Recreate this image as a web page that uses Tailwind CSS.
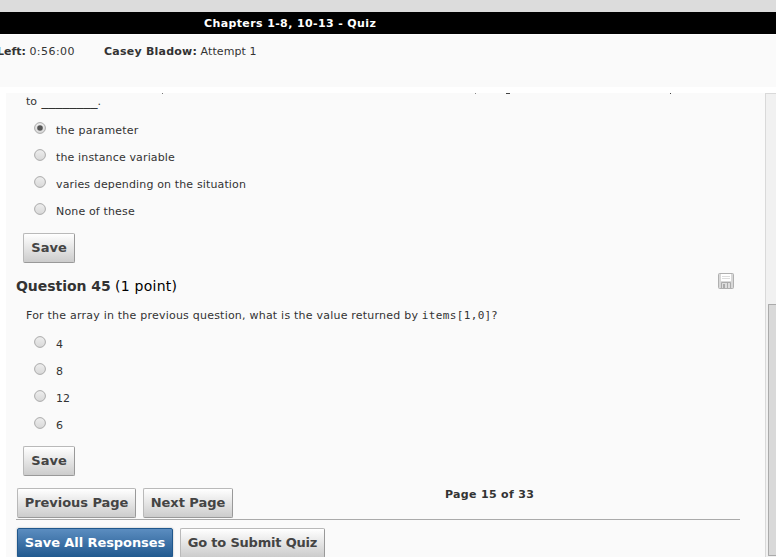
<!DOCTYPE html>
<html lang="en">
<head>
<meta charset="utf-8">
<title>Chapters 1-8, 10-13 - Quiz</title>
<script src="https://cdn.jsdelivr.net/npm/@tailwindcss/browser@4"></script>
</head>
<body class="bg-white">
<div class="w-[776px] h-[557px] overflow-hidden flex flex-col font-['DejaVu_Sans',sans-serif] text-[11px] leading-[14px] text-[#333] whitespace-nowrap">
  <div class="h-3 shrink-0 bg-[#dcdcdc]"></div>
  <header class="h-[22px] shrink-0 bg-black text-white font-bold pl-[204px] pt-[5px]"><span class="tracking-[0.38px]">Chapters 1-8, 10-13 - Quiz</span></header>
  <div class="h-[52px] mt-px shrink-0 bg-[#fafafa] flex pt-[10px]">
    <div class="w-[104px] flex"><span class="-ml-[3px]"><b>Left:</b> <span class="tracking-[0.45px]">0:56:00</span></span></div>
    <div><b class="tracking-[0.23px]">Casey Bladow:</b> <span class="tracking-[0.1px]">Attempt 1</span></div>
  </div>
  <div class="mt-[6px] ml-[6px] grow flex overflow-hidden">
    <main class="w-[759px] shrink-0 h-[464px] bg-[#fafafa] flex flex-col">
      <div class="h-px shrink-0 flex">
        <i class="w-px h-px ml-[156px] bg-[#777]"></i><i class="w-px h-px ml-[312px] bg-[#888]"></i><i class="w-1 h-px ml-[30px] bg-[#444]"></i><i class="w-px h-px ml-[160px] bg-[#444]"></i>
      </div>
      <div class="h-[20px] shrink-0 pl-5 pt-px flex">to&nbsp;<span class="ml-px text-[14px] leading-[13px]">________</span>.</div>
      <div class="flex flex-col pl-[28px] shrink-0">
        <label class="h-[27px] flex"><svg class="w-3 h-3 mt-2 mr-[10px]" viewBox="0 0 12 12"><defs><linearGradient id="r" x2="0" y2="1"><stop stop-color="#eee"/><stop offset="1" stop-color="#d8d8d8"/></linearGradient></defs><circle cx="6" cy="6" r="5.4" fill="url(#r)" stroke="#aaa"/><circle cx="6" cy="6" r="2.8" fill="#555"/></svg><span class="pt-[10px] tracking-[0.23px]">the parameter</span></label>
        <label class="h-[27px] flex"><svg class="w-3 h-3 mt-2 mr-[10px]" viewBox="0 0 12 12"><circle cx="6" cy="6" r="5.4" fill="url(#r)" stroke="#aaa"/></svg><span class="pt-[10px] tracking-[0.14px]">the instance variable</span></label>
        <label class="h-[27px] flex"><svg class="w-3 h-3 mt-2 mr-[10px]" viewBox="0 0 12 12"><circle cx="6" cy="6" r="5.4" fill="url(#r)" stroke="#aaa"/></svg><span class="pt-[10px] tracking-[0.14px]">varies depending on the situation</span></label>
        <label class="h-[27px] flex"><svg class="w-3 h-3 mt-2 mr-[10px]" viewBox="0 0 12 12"><circle cx="6" cy="6" r="5.4" fill="url(#r)" stroke="#aaa"/></svg><span class="pt-[10px] tracking-[0.15px]">None of these</span></label>
      </div>
      <button class="ml-[17px] mt-[11px] w-[52px] h-[30px] shrink-0 rounded-[2px] border border-[#b9b9b9] border-r-[#999] border-b-[#999] bg-linear-to-b from-white to-[#ccc] font-bold text-[13px] leading-[26px] text-[#444]"><span>Save</span></button>
      <div class="h-[44px] shrink-0 flex justify-between pl-[10px] pr-[31px] pt-[10px]">
        <h2 class="text-[14px] leading-[26px] text-black"><b class="text-[#333] tracking-[-0.05px]">Question 45</b> <span class="tracking-[0.25px]">(1 point)</span></h2>
        <svg class="w-4 h-4" viewBox="0 0 16 16"><rect x=".5" y=".5" width="15" height="15" rx="1" fill="#d8d8d8" stroke="#b0b0b0"/><path d="M3 1h10v7H3z" fill="#fff"/><path d="M4 3.500h8M4 5.500h8" stroke="#ddd"/><path d="M3.500 15V9.500h9V15" fill="#ddd" stroke="#aaa"/><path d="M5 11h2v4H5zM9 10h1v5H9z" fill="#aaa"/></svg>
      </div>
      <div class="h-[22px] shrink-0 pl-5 flex pt-[2px]"><span class="tracking-[0.22px]">For the array in the previous question, what is the value returned by&nbsp;</span><code class="font-['DejaVu_Sans_Mono',monospace] text-[11px] tracking-[0.35px]">items[1,0]</code><span>?</span></div>
      <div class="flex flex-col pl-[28px] shrink-0">
        <label class="h-[27px] flex"><svg class="w-3 h-3 mt-[7px] mr-[10px]" viewBox="0 0 12 12"><circle cx="6" cy="6" r="5.4" fill="url(#r)" stroke="#aaa"/></svg><span class="pt-[9px]">4</span></label>
        <label class="h-[27px] flex"><svg class="w-3 h-3 mt-[7px] mr-[10px]" viewBox="0 0 12 12"><circle cx="6" cy="6" r="5.4" fill="url(#r)" stroke="#aaa"/></svg><span class="pt-[9px]">8</span></label>
        <label class="h-[27px] flex"><svg class="w-3 h-3 mt-[7px] mr-[10px]" viewBox="0 0 12 12"><circle cx="6" cy="6" r="5.4" fill="url(#r)" stroke="#aaa"/></svg><span class="pt-[9px]">12</span></label>
        <label class="h-[27px] flex"><svg class="w-3 h-3 mt-[7px] mr-[10px]" viewBox="0 0 12 12"><circle cx="6" cy="6" r="5.4" fill="url(#r)" stroke="#aaa"/></svg><span class="pt-[9px]">6</span></label>
      </div>
      <button class="ml-[17px] mt-[9px] w-[52px] h-[30px] shrink-0 rounded-[2px] border border-[#b9b9b9] border-r-[#999] border-b-[#999] bg-linear-to-b from-white to-[#ccc] font-bold text-[13px] leading-[26px] text-[#444]"><span>Save</span></button>
      <div class="mt-3 ml-[10px] w-[724px] h-8 shrink-0 pl-px flex border-b border-[#aaa]">
        <button class="w-[119px] h-[30px] rounded-[2px] border border-[#b9b9b9] border-r-[#999] border-b-[#999] bg-linear-to-b from-white to-[#ccc] font-bold text-[13px] leading-[26px] text-[#444] tracking-[-0.04px]"><span>Previous Page</span></button>
        <button class="ml-[7px] w-[90px] h-[30px] rounded-[2px] border border-[#b9b9b9] border-r-[#999] border-b-[#999] bg-linear-to-b from-white to-[#ccc] font-bold text-[13px] leading-[26px] text-[#444] tracking-[-0.04px]"><span>Next Page</span></button>
        <b class="ml-[212px] tracking-[0.32px]"><span>Page 15 of 33</span></b>
      </div>
      <div class="mt-2 ml-[11px] flex shrink-0">
        <button class="w-[156px] h-[30px] rounded-[2px] border border-[#1f578c] bg-linear-to-b from-[#5b8dc0] to-[#20598f] font-bold text-[13px] leading-[26px] text-white shadow-[0_0_2px_#aaa] tracking-[-0.08px]"><span>Save All Responses</span></button>
        <button class="ml-[7px] w-[145px] h-[30px] rounded-[2px] border border-[#b9b9b9] border-r-[#999] border-b-[#999] bg-linear-to-b from-white to-[#ccc] font-bold text-[13px] leading-[26px] text-[#444] tracking-[-0.2px]"><span>Go to Submit Quiz</span></button>
      </div>
    </main>
    <aside class="w-[11px] h-[464px] bg-[#f1f1f1] border-l border-t border-[#d9d9d9] pl-[2px] pt-[210px]">
      <div class="w-[8px] h-[252px] border border-r-0 border-[#aaa] bg-[#d9d9d9] rounded-l-[1px]"></div>
    </aside>
  </div>
</div>
</body>
</html>
